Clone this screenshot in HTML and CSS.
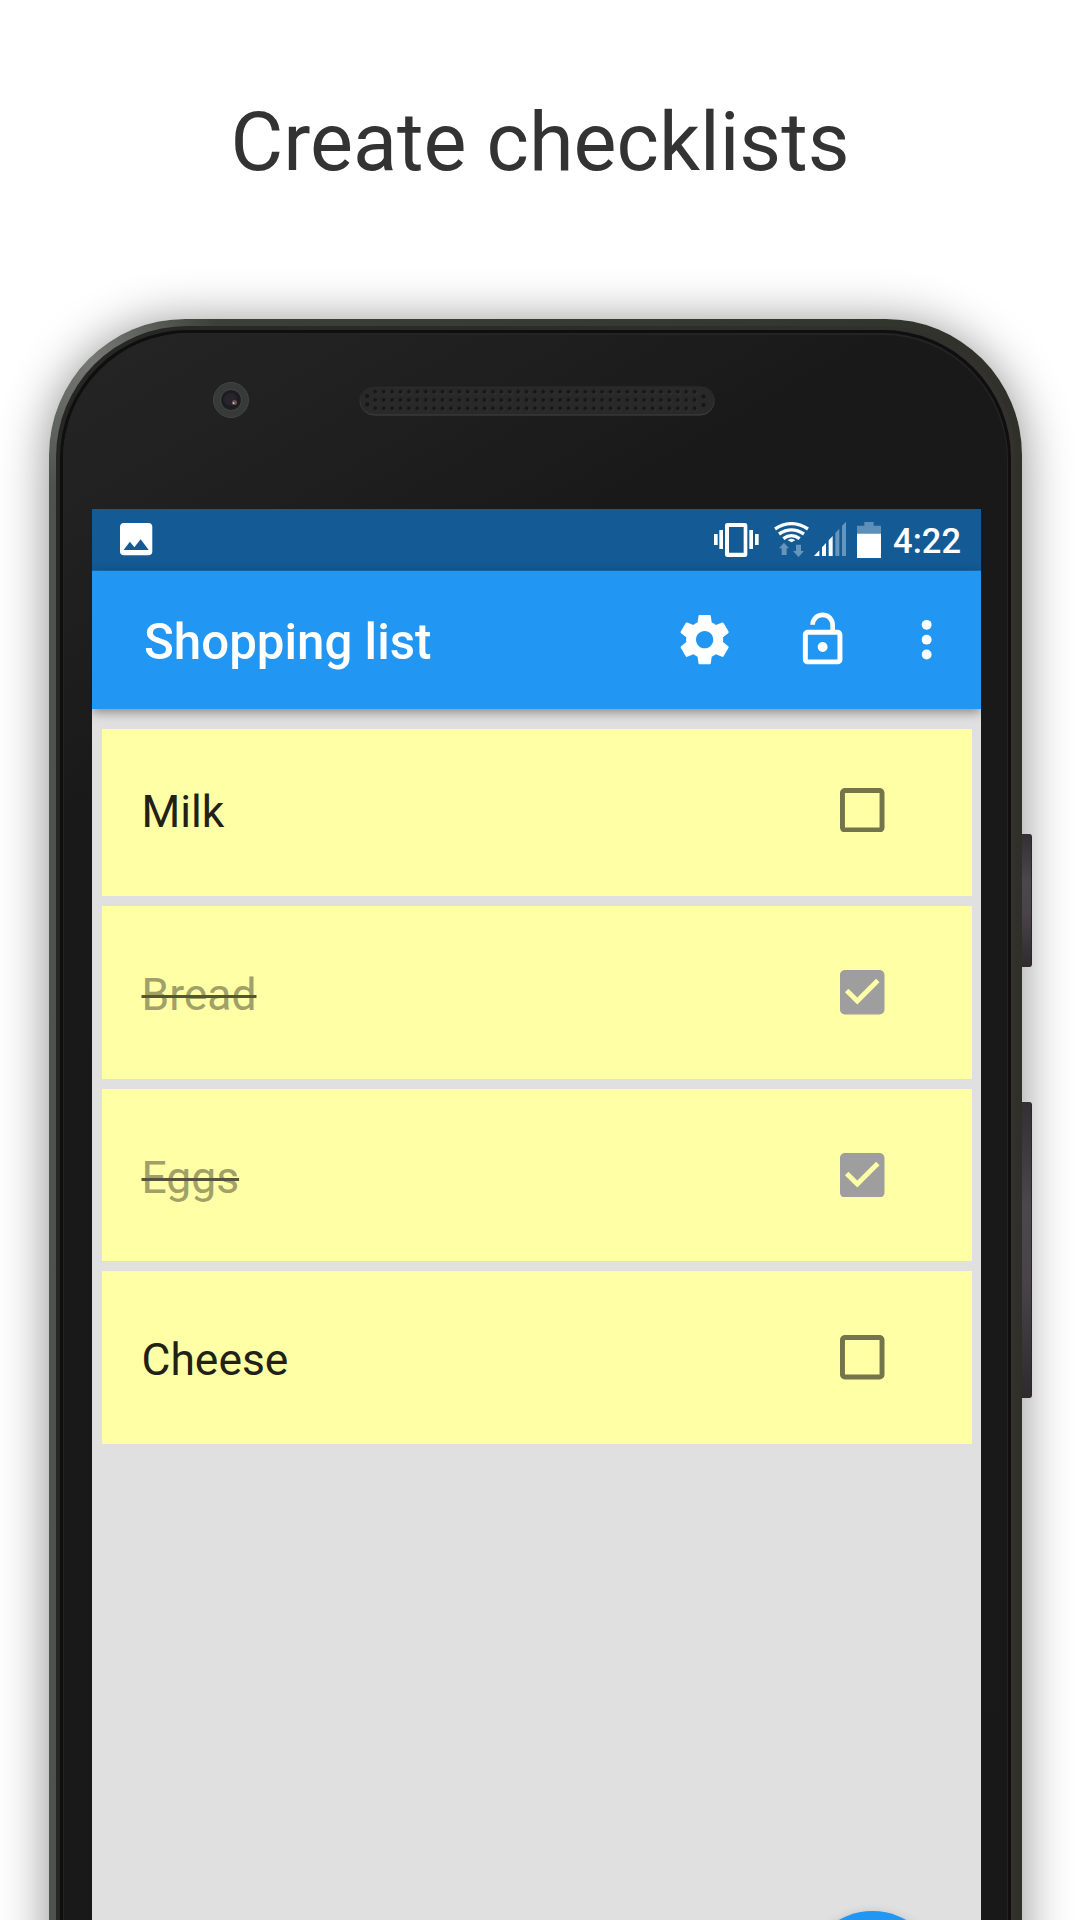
FILE: index.html
```html
<!DOCTYPE html>
<html lang="en">
<head>
<meta charset="utf-8">
<title>Create checklists</title>
<link rel="stylesheet" href="styles.css">
</head>
<body>
<main class="page">
  <h1 class="headline">Create checklists</h1>
  <div class="phone">
    <span class="side-button power"></span>
    <span class="side-button volume"></span>
    <div class="bevel"><div class="groove"><div class="face">
      <div class="forehead">
        <svg class="camera" width="36" height="36" viewBox="0 0 36 36">
          <circle cx="18" cy="18" r="17.5" fill="#383a39" stroke="#434544"/>
          <circle cx="18" cy="18" r="10.5" fill="#1d1d20" stroke="#4a4c4c" stroke-width=".8"/>
          <circle cx="17.5" cy="17.5" r="6.5" fill="#28242d"/>
          <circle cx="21.5" cy="20.5" r="2.6" fill="#65504f"/>
          <circle cx="20.6" cy="21" r="1" fill="#c9b9b5"/>
        </svg>
        <svg class="speaker" width="356" height="31" viewBox="0 0 356 31">
          <defs>
            <pattern id="holes" x="12.2" y="2.6" width="8.4" height="8.3" patternUnits="userSpaceOnUse">
              <circle cx="4.7" cy="4.7" r="2.2" fill="#3a3a3a"/>
              <circle cx="4.2" cy="4.15" r="2.1" fill="#171717"/>
            </pattern>
            <linearGradient id="lip" x2="0" y2="1">
              <stop offset="0" stop-color="#1c1c1c"/>
              <stop offset="1" stop-color="#424242"/>
            </linearGradient>
          </defs>
          <rect x=".8" y=".8" width="354.700" height="29.2" rx="14.6" fill="#292929" stroke="url(#lip)"/>
          <rect x="12.2" y="2.6" width="327.6" height="24.9" fill="url(#holes)"/>
          <g fill="#171717">
            <circle cx="8.2" cy="11" r="2.1"/><circle cx="8.2" cy="19.4" r="2.1"/>
            <circle cx="344.5" cy="11.5" r="2.1"/><circle cx="344.5" cy="20" r="2.1"/>
          </g>
        </svg>
      </div>
      <div class="screen">
        <div class="status">
          <svg class="picture" viewBox="3 3 18 18"><path d="M21 19V5c0-1.100-.9-2-2-2H5c-1.100 0-2 .9-2 2v14c0 1.100.9 2 2 2h14c1.100 0 2-.9 2-2zM8.500 13.500l2.500 3.010L14.500 12l4.500 6H5l3.500-4.500z"/></svg>
          <svg class="tray" width="167" height="36" viewBox="72 66 501 108">
            <path fill-rule="evenodd" d="M112 69h53q7 0 7 7v88q0 7-7 7h-53q-7 0-7-7v-88q0-7 7-7zM117 81v77h44v-77z"/>
            <path d="M72 102h11v33h-11zM88 90h11v57h-11zM178 90h11v57h-11zM195 102h11v33h-11z"/>
            <g fill="none" stroke="#fff" stroke-width="10">
              <path d="M255 87Q304 55 354 87"/>
              <path d="M267 102Q304 77 342 102"/>
              <path d="M280 116Q304 98 329 116"/>
            </g>
            <path d="M293 121q11-9 23 0l-11.500 6z"/>
            <g fill="#6696bd">
              <path d="M282 128l15 17h-7v20h-15v-20h-8zM318 134h15v19h9l-16.500 18-16.500-18h9z"/>
              <path d="M436 99l12-13v82h-12zM456 78l12-13v103h-12z"/>
              <path d="M501 102V77h22V66h28v11h22v25z" fill="#5d8fb8"/>
            </g>
            <path d="M372 168l16-17v17zM396 142l12-13v39h-12zM416 121l12-13v60h-12zM501 101h72v73h-72z"/>
          </svg>
          <span class="clock">4:22</span>
        </div>
        <header class="toolbar">
          <h2 class="title">Shopping list</h2>
          <svg class="action" viewBox="0 0 24 24"><path d="M19.430 12.980c.04-.32.07-.64.07-.98s-.03-.66-.07-.98l2.110-1.650c.19-.15.24-.42.12-.64l-2-3.460c-.12-.22-.39-.3-.61-.22l-2.490 1c-.52-.4-1.080-.73-1.690-.98l-.38-2.650C14.460 2.180 14.250 2 14 2h-4c-.25 0-.46.18-.49.42l-.38 2.650c-.61.25-1.170.59-1.690.98l-2.490-1c-.23-.09-.49 0-.61.22l-2 3.460c-.13.22-.07.49.12.64l2.110 1.650c-.04.32-.07.65-.07.98s.03.66.07.98l-2.110 1.650c-.19.15-.24.42-.12.64l2 3.460c.12.22.39.3.61.22l2.490-1c.52.4 1.080.73 1.690.98l.38 2.650c.03.24.24.42.49.42h4c.25 0 .46-.18.49-.42l.38-2.650c.61-.25 1.170-.59 1.690-.98l2.490 1c.23.09.49 0 .61-.22l2-3.460c.12-.22.07-.49-.12-.64l-2.110-1.650zM12 15.500c-1.930 0-3.500-1.570-3.500-3.500s1.570-3.500 3.500-3.500 3.500 1.570 3.500 3.500-1.570 3.500-3.500 3.500z"/></svg>
          <svg class="action lock" viewBox="0 0 24 24"><path d="M12 17c1.100 0 2-.9 2-2s-.9-2-2-2-2 .9-2 2 .9 2 2 2zm6-9h-1V6c0-2.760-2.240-5-5-5S7 3.240 7 6h1.900c0-1.710 1.390-3.100 3.100-3.100s3.100 1.390 3.100 3.100v2H6c-1.100 0-2 .9-2 2v10c0 1.100.9 2 2 2h12c1.100 0 2-.9 2-2V10c0-1.100-.9-2-2-2zm0 12H6V10h12v10z"/></svg>
          <svg class="action more" viewBox="0 0 24 24"><circle cx="12" cy="6" r="2"/><circle cx="12" cy="12" r="2"/><circle cx="12" cy="18" r="2"/></svg>
        </header>
        <ul class="list">
          <li class="item first"><span class="label">Milk</span>
            <svg class="box" viewBox="3 3 18 18"><path d="M19 5v14H5V5h14m0-2H5c-1.100 0-2 .9-2 2v14c0 1.100.9 2 2 2h14c1.100 0 2-.9 2-2V5c0-1.100-.9-2-2-2z"/></svg></li>
          <li class="item done"><span class="label">Bread</span>
            <svg class="box" viewBox="3 3 18 18"><path d="M19 3H5c-1.110 0-2 .9-2 2v14c0 1.100.89 2 2 2h14c1.110 0 2-.9 2-2V5c0-1.100-.89-2-2-2zm-9 14l-5-5 1.410-1.410L10 14.170l7.590-7.590L19 8l-9 9z"/></svg></li>
          <li class="item done"><span class="label">Eggs</span>
            <svg class="box" viewBox="3 3 18 18"><path d="M19 3H5c-1.110 0-2 .9-2 2v14c0 1.100.89 2 2 2h14c1.110 0 2-.9 2-2V5c0-1.100-.89-2-2-2zm-9 14l-5-5 1.410-1.410L10 14.170l7.590-7.590L19 8l-9 9z"/></svg></li>
          <li class="item"><span class="label">Cheese</span>
            <svg class="box" viewBox="3 3 18 18"><path d="M19 5v14H5V5h14m0-2H5c-1.100 0-2 .9-2 2v14c0 1.100.9 2 2 2h14c1.100 0 2-.9 2-2V5c0-1.100-.9-2-2-2z"/></svg></li>
        </ul>
        <span class="fab"></span>
      </div>
    </div></div></div>
  </div>
</main>
</body>
</html>
```
FILE: styles.css
```css
* { box-sizing: border-box; }
body { margin: 0; background: #fff; font-family: Roboto, sans-serif; }
svg { display: block; flex: none; }

.page {
  width: 1080px;
  height: 1920px;
  overflow: hidden;
  display: flex;
  flex-direction: column;
}
.headline {
  flex: none;
  height: 319px;
  margin: 0;
  padding-top: 95px;
  font-size: 81px;
  font-weight: 400;
  line-height: 96px;
  text-align: center;
  color: #333;
}

/* Handset body: rim, bevel, groove and glass are nested shells */
.phone {
  position: relative;
  flex: none;
  width: 973.500px;
  height: 1700px;
  margin-left: 48.500px;
  padding: 7px 7px 0 7.500px;
  border-radius: 136px 136px 0 0;
  background:
    radial-gradient(circle at 45px 45px, rgba(125, 127, 124, .85), rgba(125, 127, 124, 0) 130px),
    linear-gradient(90deg, #4f534e, #3d4038 15%, #34372f 80%, #2e3029);
  box-shadow: 0 4px 50px rgba(0, 0, 0, .45);
}
.bevel {
  height: 100%;
  padding: 4px 4px 0;
  border-radius: 131px 131px 0 0;
  background: linear-gradient(90deg, #262725, #2b2b2a 50%, #33322f);
}
.groove {
  height: 100%;
  padding: 3px 3px 0 2.500px;
  border-radius: 128px 128px 0 0;
  background: #0f0f0f;
}
.face {
  height: 100%;
  padding: 0 27px 0 29.500px;
  border-radius: 126px 126px 0 0;
  background: linear-gradient(150deg, #252525, #202020 200px, #191919 430px, #181818);
  box-shadow: inset 0 1px 0 1px #242424;
}
.side-button {
  position: absolute;
  left: 100%;
  width: 9.500px;
  border-radius: 0 3px 3px 0;
  border-right: 1px solid #2b282b;
  background: linear-gradient(#332f33, #4c464d 35%, #4a444a 60%, #2e2a2d);
}
.power { top: 515px; height: 133px; }
.volume { top: 783px; height: 296px; }

.forehead {
  display: flex;
  align-items: center;
  height: 176px;
  padding: 0 0 42px 121px;
}
.speaker { margin-left: 110px; }

.screen {
  position: relative;
  height: 1411px;
  background: #e0e0e0;
  overflow: hidden;
}
.status {
  display: flex;
  align-items: center;
  height: 62px;
  padding: 0 20px 0 28.400px;
  background: #145a94;
  border-bottom: 1px solid #1b6db3;
  fill: #fff;
}
.picture { width: 32.300px; height: 32.300px; }
.tray { margin-left: auto; }
.clock {
  margin-left: 12px;
  font-size: 34.500px;
  font-weight: 500;
  line-height: 40px;
  color: #fff;
  padding-top: 3px;
}
.toolbar {
  position: relative;
  display: flex;
  align-items: center;
  height: 138px;
  padding-left: 52px;
  background: #2196f3;
  box-shadow: 0 3px 10px rgba(0, 0, 0, .4);
  fill: #fff;
}
.title {
  flex: 1;
  margin: 0;
  padding-top: 3px;
  font-size: 49.250px;
  font-weight: 500;
  line-height: 58px;
  color: #fff;
}
.action { width: 59.300px; height: 59.300px; }
.lock { margin-left: 59px; }
.more { margin: 0 24.300px 0 44.700px; }

.list {
  display: grid;
  grid-template-rows: 167px 173px 172px 173px;
  row-gap: 10px;
  margin: 0;
  padding: 20px 9.500px 0 10px;
  list-style: none;
}
.item {
  display: flex;
  align-items: center;
  justify-content: space-between;
  padding: 0 86.700px 0 39.500px;
  background: #ffffa5;
  fill: #75754c;
}
.first { padding-bottom: 5px; }
.label {
  padding-top: 5px;
  font-size: 44.400px;
  line-height: 52px;
  color: #212115;
}
.first .label { padding-top: 4px; }
.done { fill: #9e9e9e; }
.done .label {
  color: #a0a068;
  text-decoration: line-through 2.500px #55553a;
}
.box { width: 44.500px; height: 44.500px; }

.fab {
  position: absolute;
  left: 713px;
  top: 1401.500px;
  width: 135px;
  height: 135px;
  border-radius: 50%;
  background: #2196f3;
  box-shadow: 0 4px 12px rgba(0, 0, 0, .25);
}
```
